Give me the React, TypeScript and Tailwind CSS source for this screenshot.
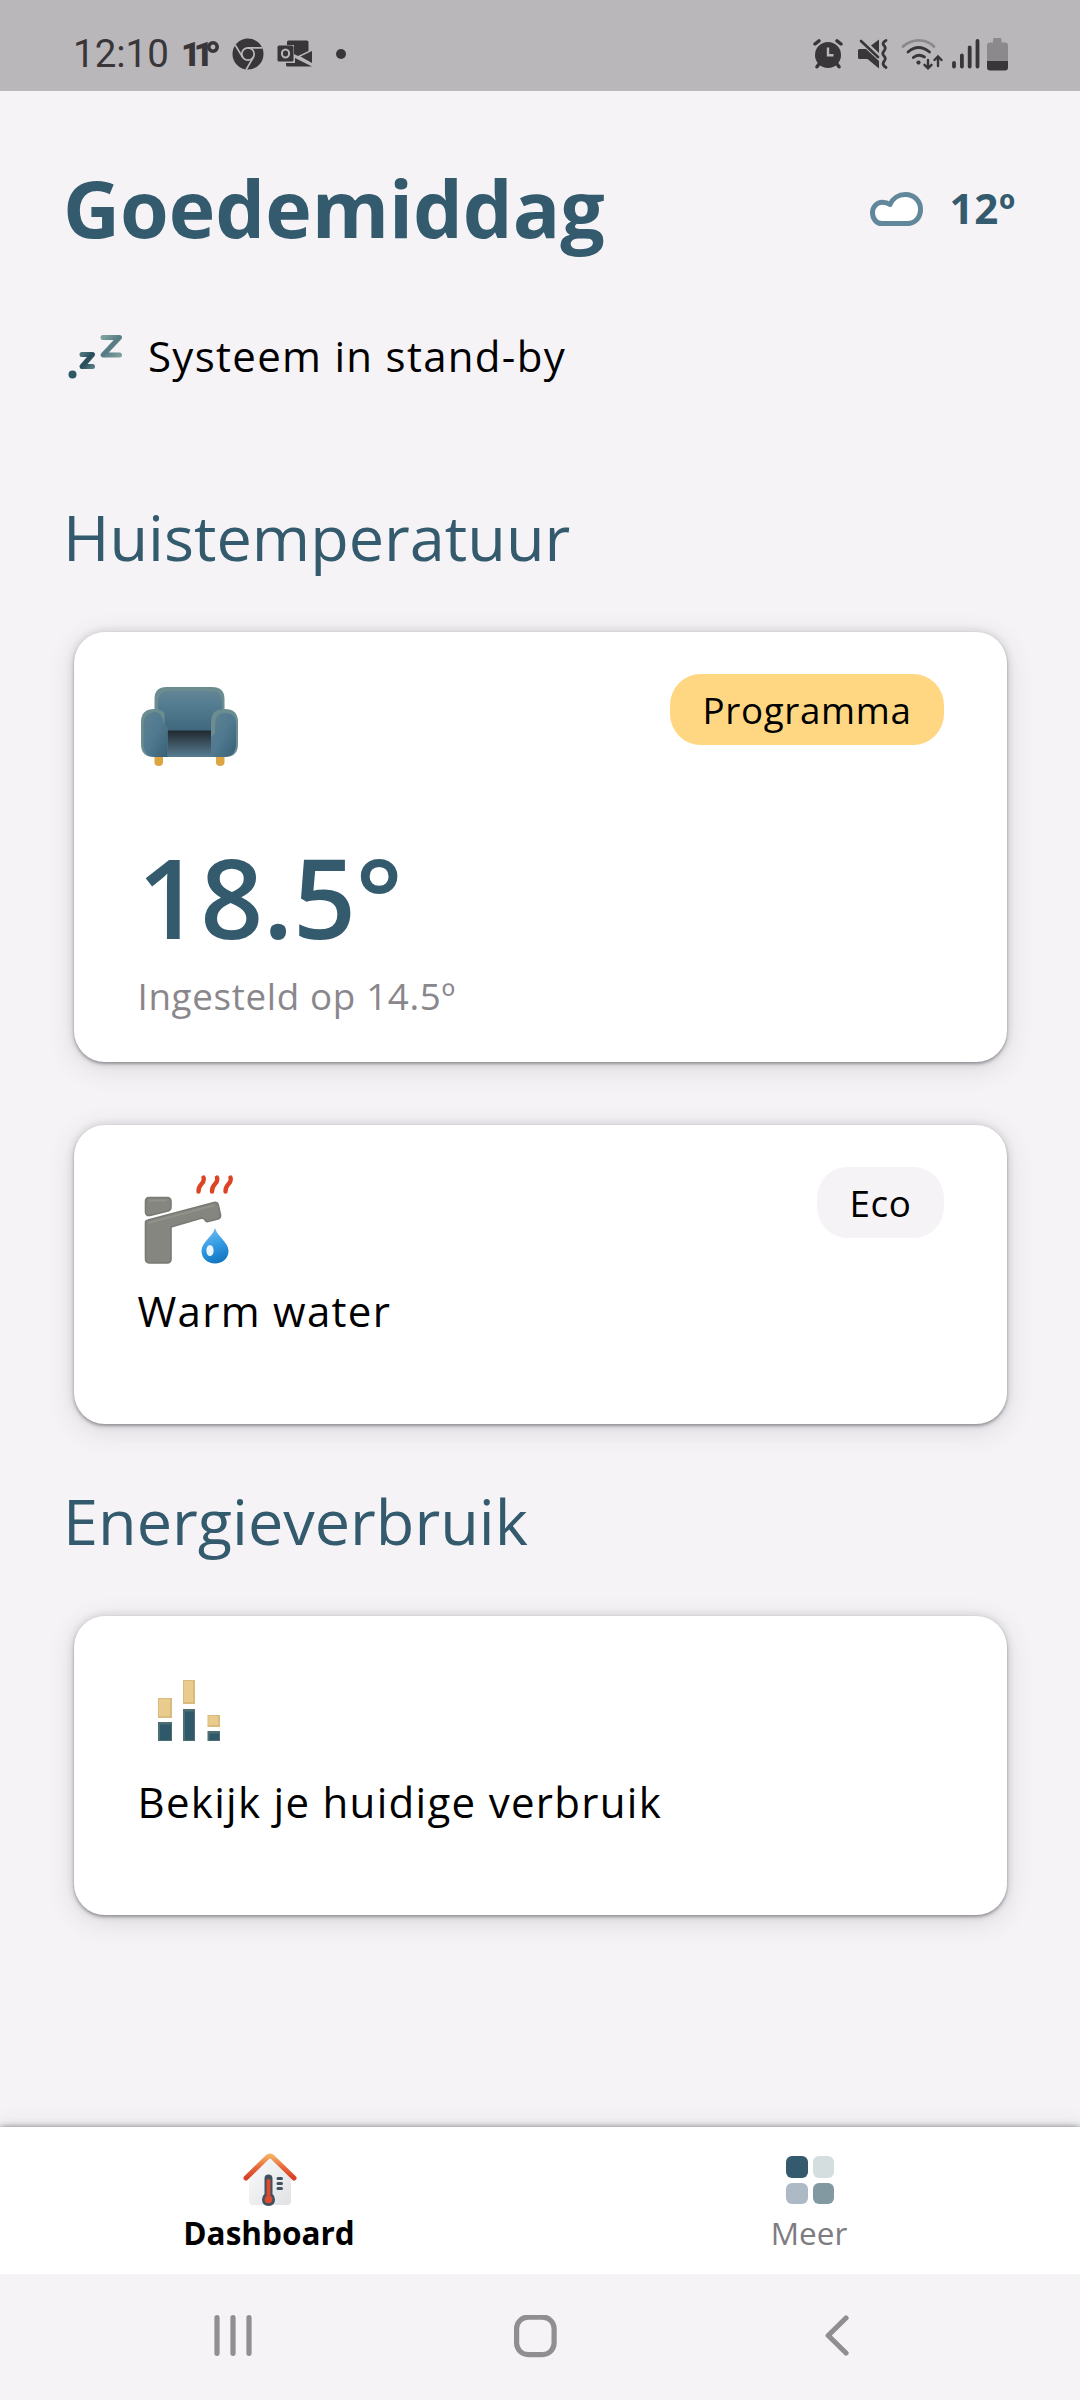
import type {ReactNode} from 'react';

function ChromeIcon() {
	return (
		<svg width="32" height="32" viewBox="0 0 32 32">
			<circle cx="16" cy="16" r="15.5" fill="#39363a" />
			<g fill="none" stroke="#b9b7b9" strokeWidth="1.7">
				<circle cx="16" cy="16" r="6.2" />
				<path d="M16 9.8H30M10.6 19.1L3.2 7M21.4 19.1L14.2 31.5" />
			</g>
		</svg>
	);
}

function OutlookIcon() {
	return (
		<svg width="35" height="28" viewBox="0 0 35 28">
			<path d="M10 2Q10 .5 11.5 .5H30Q31.5 .5 31.5 2V11L21 16 17 14V5H10z" fill="#39363a" />
			<path d="M35 11V23L23.5 16.5zM9 23H18V18L35 26.5H10.5Q9 26.5 9 25z" fill="#39363a" />
			<rect x=".5" y="5.5" width="16" height="16" rx="1.5" fill="#39363a" />
			<ellipse cx="8.5" cy="13.5" rx="3.6" ry="4" fill="none" stroke="#b9b7b9" strokeWidth="2" />
		</svg>
	);
}

function AlarmIcon() {
	return (
		<svg width="30" height="30" viewBox="0 0 30 30">
			<circle cx="15" cy="16" r="13" fill="#39363a" />
			<g fill="none" stroke="#39363a" strokeWidth="3.4" strokeLinecap="round">
				<path d="M2 5L6 1.8M28 5L24 1.8M6 25L4 27.8M24 25L26 27.8" />
			</g>
			<path d="M15 8.5V16.2H20.5" fill="none" stroke="#b9b7b9" strokeWidth="2.4" />
		</svg>
	);
}

function MuteVibrateIcon() {
	return (
		<svg width="31" height="30" viewBox="0 0 31 30">
			<path d="M1.5 10H8L21 22V29.5L9.5 20H1.5Q0 20 0 18.5V11.5Q0 10 1.5 10zM21 .5V14L13 6.5z" fill="#39363a" />
			<path d="M3 2L20 18" stroke="#39363a" strokeWidth="2.6" strokeLinecap="round" />
			<path
				d="M28 1.5Q23.5 4 26 6.5T26 12Q23.5 14.5 26 17T26 22.5Q23.5 25.5 28 28.5"
				fill="none"
				stroke="#39363a"
				strokeWidth="2.8"
				strokeLinecap="round"
			/>
		</svg>
	);
}

function WifiIcon() {
	return (
		<svg width="42" height="32" viewBox="0 0 42 32">
			<g fill="none" strokeWidth="2.8" strokeLinecap="round">
				<path d="M2 8.5C11 .2 25 .2 33 8.5" stroke="#8b898c" />
				<g stroke="#39363a">
					<path d="M7 14Q17.5 5 28.5 14M12.3 19.5Q17.5 15.2 23.5 19" />
					<path d="M27 22V30M23.5 26.8L27 30.3 30.5 26.8M37 28V19M33.5 22L37 18.5 40.5 22" strokeWidth="2.4" />
				</g>
			</g>
			<circle cx="17.5" cy="24.6" r="2.1" fill="#39363a" />
		</svg>
	);
}

function SignalIcon() {
	return (
		<svg width="28" height="30" viewBox="0 0 28 30">
			<path
				d="M2 24V27.5M9.9 16.5V27.5M17.7 8.5V27.5M25.5 2V27.5"
				stroke="#39363a"
				strokeWidth="3.8"
				strokeLinecap="round"
			/>
		</svg>
	);
}

function BatteryIcon() {
	return (
		<svg width="21" height="33" viewBox="0 0 21 33">
			<path d="M6 1.5Q6 0 7.5 0H13Q14.5 0 14.5 1.5V4.5H18Q21 4.5 21 7.5V23H0V7.5Q0 4.5 3 4.5H6z" fill="#8b898c" />
			<path d="M0 23H21V29.5Q21 32.5 18 32.5H3Q0 32.5 0 29.5z" fill="#39363a" />
		</svg>
	);
}

function StatusBar() {
	return (
		<div className="h-[91px] shrink-0 bg-[#b9b7b9] text-[#39363a] pt-[17px] pl-[73px] pr-[72px] flex items-center justify-between">
			<div className="flex items-center">
				<span className="w-[108px] font-[Roboto,sans-serif] text-[38.5px] leading-none">12:10</span>
				<span className="w-[26px] font-[Roboto,sans-serif] text-[34px] leading-none font-black tracking-[-7px]">11</span>
				<span className="w-[25px] h-[26px]">
					<svg width="12" height="12" viewBox="0 0 12 12">
						<circle cx="6" cy="6" r="4.2" fill="none" stroke="#39363a" strokeWidth="3.6" />
					</svg>
				</span>
				<ChromeIcon />
				<span className="ml-[13px]">
					<OutlookIcon />
				</span>
				<span className="ml-[24px] size-[10px] rounded-full bg-[#39363a]" />
			</div>
			<div className="flex items-center">
				<AlarmIcon />
				<span className="ml-[15px]">
					<MuteVibrateIcon />
				</span>
				<span className="ml-[12px]">
					<WifiIcon />
				</span>
				<span className="ml-[9px]">
					<SignalIcon />
				</span>
				<span className="ml-[7px]">
					<BatteryIcon />
				</span>
			</div>
		</div>
	);
}

function CloudIcon() {
	return (
		<svg width="53" height="35" viewBox="0 0 53 35">
			<path
				d="M12 31.5H37.5C45 31.5 50.5 25.5 50.5 17.5 50.5 9 44 2.5 35.5 2.5 28.5 2.5 22.5 6.5 20 12.5 17.5 10.8 15 10.3 12.5 10.3 6.5 10.3 2.5 15 2.5 20.8 2.5 27 6.5 31.5 12 31.5z"
				fill="#fff"
				stroke="#62879a"
				strokeWidth="5"
				strokeLinejoin="round"
			/>
		</svg>
	);
}

function SleepIcon() {
	return (
		<svg width="55" height="50" viewBox="0 0 55 50">
			<defs>
				<linearGradient id="zzz" x1="0" y1="0" x2="1" y2="1">
					<stop offset="0" stopColor="#7e9f9f" />
					<stop offset=".5" stopColor="#547b83" />
					<stop offset="1" stopColor="#7d9e9c" />
				</linearGradient>
				<linearGradient id="zzzDark" x1="0" y1="0" x2="1" y2="1">
					<stop offset="0" stopColor="#4b727b" />
					<stop offset=".5" stopColor="#264c5c" />
					<stop offset="1" stopColor="#52777c" />
				</linearGradient>
			</defs>
			<g fill="none" strokeLinecap="round" strokeLinejoin="round">
				<path d="M35 6.5H51.5L35 24H51.5" stroke="url(#zzz)" strokeWidth="5" />
				<path d="M14 23.5H24.5L14 35.5H24.5" stroke="url(#zzzDark)" strokeWidth="5" />
			</g>
			<circle cx="4.5" cy="43.5" r="4" fill="#2f5867" />
		</svg>
	);
}

function SofaIcon() {
	return (
		<svg width="97" height="80" viewBox="0 0 97 80">
			<defs>
				<linearGradient id="sofa" x1="0" y1="0" x2="0" y2="1">
					<stop offset="0" stopColor="#628595" />
					<stop offset=".35" stopColor="#537c91" />
					<stop offset="1" stopColor="#3d657b" />
				</linearGradient>
				<linearGradient id="sofaArm" x1="0" y1="0" x2="1" y2="1">
					<stop offset="0" stopColor="#5e8190" />
					<stop offset=".5" stopColor="#507990" />
					<stop offset="1" stopColor="#385f75" />
				</linearGradient>
				<linearGradient id="sofaSeat" x1="0" y1="0" x2="0" y2="1">
					<stop offset="0" stopColor="#20292f" />
					<stop offset="1" stopColor="#587d92" />
				</linearGradient>
			</defs>
			<path d="M13.5 66H22V75Q22 79 17.7 79T13.5 75zM75 66H83.5V75Q83.5 79 79.2 79T75 75z" fill="#dda442" />
			<path d="M13.5 46V12Q13.5 0 25.5 0H71Q83.5 0 83.5 12V46z" fill="#6b8d90" />
			<path d="M17 46V15Q17 4 28 4H69Q81 4 81 15V46z" fill="url(#sofa)" />
			<rect x="25" y="43.5" width="47" height="26.5" fill="url(#sofaSeat)" />
			<path d="M0 35Q0 22 13.5 22 20 22 23.5 26V38L26.5 41V70H13Q0 70 0 57z" fill="#6b8d90" />
			<path d="M2.5 37Q2.5 26 14 25 21 25 23 37L26.5 41V70H13Q2.5 69 2.5 57z" fill="url(#sofaArm)" />
			<path d="M70 35Q70 22 83.5 22 97 22 97 35V57Q97 70 84 70H70z" fill="#6b8d90" />
			<path d="M74 39Q74 26 84 26 95 26 95 37V57Q95 69 84 70H70V50L74 46z" fill="url(#sofaArm)" />
		</svg>
	);
}

function TapIcon() {
	return (
		<svg width="92" height="90" viewBox="0 0 92 90">
			<defs>
				<linearGradient id="drop" x1=".3" y1="0" x2=".6" y2="1">
					<stop offset="0" stopColor="#72bdf0" />
					<stop offset=".5" stopColor="#329be3" />
					<stop offset="1" stopColor="#1174bf" />
				</linearGradient>
			</defs>
			<g fill="#85867f" stroke="#797a74" strokeWidth="1.6" strokeLinejoin="round">
				<path d="M5 22.5H23Q27 22.5 27 26.5V32Q27 35 24 36L6 40.5Q1.5 41 1.5 37V26.5Q1.5 22.5 5 22.5z" />
				<path d="M1.5 47.5Q1.5 45.5 4 45L70 27.5Q73.5 27 74.3 30L76.5 40Q77 43 74 44L64 46.5Q61.5 47 60.5 44L58 43 27 52V84Q27 88 23 88H6Q1.5 88 1.5 84z" />
			</g>
			<path d="M4 48L71 30M5 25.5H23" stroke="#919289" strokeWidth="2" />
			<path
				d="M59.5 2.5Q60.5 6 57.5 9T54.5 16.5M73 2.5Q74 6 71 9T68 16.5M86.5 2.5Q87.5 6 84.5 9T81.5 16.5"
				fill="none"
				stroke="#dc4524"
				strokeWidth="4.4"
				strokeLinecap="round"
			/>
			<path d="M71 53C68.5 62 57.5 67 57.5 76 57.5 83.5 63.5 88.5 71 88.5S84.5 83.500 84.500 76C84.500 67 73.500 62 71 53z" fill="url(#drop)" />
			<ellipse cx="66" cy="75.5" rx="3.6" ry="5.5" fill="#eaf5fd" />
		</svg>
	);
}

const bars = [
	{x: 0, width: 14, light: [18, 20], dark: [42, 19]},
	{x: 25, width: 12, light: [0, 24], dark: [29, 32]},
	{x: 49.5, width: 12.5, light: [35, 12], dark: [51, 10]},
];

function UsageIcon() {
	return (
		<svg width="62" height="61" viewBox="0 0 62 61">
			{bars.map((b) => (
				<g key={b.x}>
					<rect x={b.x} y={b.light[0]} width={b.width} height={b.light[1]} fill="#d8bc7d" />
					<rect x={b.x + 1} y={b.light[0] + 1} width={b.width - 3} height={b.light[1] - 3} fill="#e8cb8d" />
					<rect x={b.x} y={b.dark[0]} width={b.width} height={b.dark[1]} fill="#4d6f72" />
					<rect x={b.x + 2} y={b.dark[0] + 2.5} width={b.width - 3} height={b.dark[1] - 3.5} fill="#2f586a" />
				</g>
			))}
		</svg>
	);
}

function HouseIcon() {
	return (
		<svg width="54" height="54" viewBox="0 0 54 54">
			<defs>
				<linearGradient id="roof" x1="0" y1="0" x2="0" y2="1">
					<stop offset="0" stopColor="#f3ae62" />
					<stop offset=".5" stopColor="#e8693d" />
					<stop offset="1" stopColor="#d73f26" />
				</linearGradient>
				<linearGradient id="wall" x1="0" y1="0" x2="1" y2="1">
					<stop offset="0" stopColor="#fbfbfc" />
					<stop offset="1" stopColor="#dfe1e4" />
				</linearGradient>
			</defs>
			<path d="M6 23L27 4 48 23V48Q48 52 44 52H10Q6 52 6 48z" fill="url(#wall)" />
			<path d="M3 25L24.5 4Q27 2 29.5 4L51 25" fill="none" stroke="url(#roof)" strokeWidth="5" strokeLinecap="round" />
			<path d="M35 25.5H38.5M35 30.5H38.5M35 35.5H38.5" stroke="#405260" strokeWidth="3" strokeLinecap="round" />
			<path d="M21.5 25.5Q21.5 21.5 25.5 21.5T29.5 25.5V41Q32 43 32 46.5 32 53 25.5 53T19 46.5Q19 43 21.5 41z" fill="#405260" />
			<path d="M25.5 28V46" stroke="#dc4b2c" strokeWidth="4" strokeLinecap="round" />
			<circle cx="25.5" cy="46.5" r="3.8" fill="#dc4b2c" />
		</svg>
	);
}

function Card({className, children}: {className: string; children: ReactNode}) {
	return (
		<div
			className={`mx-[9.5px] rounded-[31px] bg-white pl-16 pr-[63px] shadow-[0_2px_3px_rgba(60,55,62,0.4),0_0_8px_rgba(60,55,62,0.2),0_6px_28px_rgba(60,55,62,0.14)] ${className}`}
		>
			{children}
		</div>
	);
}

function Heading({className, children}: {className: string; children: ReactNode}) {
	return <h2 className={`-ml-px text-[63px] leading-[86px] text-[#335a6d] ${className}`}>{children}</h2>;
}

export default function App() {
	return (
		<div className="w-[1080px] h-[2400px] flex flex-col overflow-hidden bg-[#f5f3f6] text-black font-['Open_Sans',sans-serif]">
			<StatusBar />

			<main className="flex-1 px-16 pt-[63px]">
				<div className="-ml-px flex items-center justify-between text-[#335a6d] font-bold">
					<h1 className="text-[78.75px] leading-[108px]">Goedemiddag</h1>
					<div className="flex items-center gap-[27px]">
						<div className="mt-[2px]">
							<CloudIcon />
						</div>
						<span className="-mt-[2px] text-[42px] leading-[57px] tracking-[0.7px]">12º</span>
					</div>
				</div>

				<div className="mt-[64px] h-[60px] flex items-center pl-[4px]">
					<SleepIcon />
					<span className="ml-[25px] text-[42px] leading-[60px] tracking-[1.3px]">Systeem in stand-by</span>
				</div>

				<Heading className="mt-[108px]">Huistemperatuur</Heading>
				<Card className="mt-[52px] h-[430px] pt-[42px]">
					<div className="h-[92px] flex items-start justify-between">
						<div className="mt-[13px] ml-[3px]">
							<SofaIcon />
						</div>
						<span className="h-[71px] px-[32px] rounded-[31px] bg-[#ffd782] text-[36.75px] leading-[73px] tracking-[0.66px]">
							Programma
						</span>
					</div>
					<p className="mt-[75px] text-[110.25px] leading-[110px] font-semibold tracking-[-0.3px] text-[#335a6d]">18.5°</p>
					<p className="mt-[20px] text-[36.75px] leading-[50px] tracking-[0.66px] text-[#8a878c]">Ingesteld op 14.5º</p>
				</Card>

				<Card className="mt-[63px] h-[299px] pt-[42px]">
					<div className="h-[115px] flex items-start justify-between">
						<div className="mt-[8px] ml-[6px]">
							<TapIcon />
						</div>
						<span className="h-[71px] px-[32px] rounded-[31px] bg-[#f5f3f6] text-[36.75px] leading-[73px] tracking-[0.66px]">
							Eco
						</span>
					</div>
					<p className="text-[42px] leading-[57px] tracking-[1.3px]">Warm water</p>
				</Card>

				<Heading className="mt-[54px]">Energieverbruik</Heading>
				<Card className="mt-[52px] h-[299px] pt-[64px]">
					<div className="h-[93px] pl-[20px]">
						<UsageIcon />
					</div>
					<p className="text-[42px] leading-[57px] tracking-[1.3px]">Bekijk je huidige verbruik</p>
				</Card>
			</main>

			<nav className="h-[147px] shrink-0 grid grid-cols-2 bg-white pt-[26px] text-[31.5px] leading-[43px] shadow-[0_0_6px_rgba(60,55,62,0.6),0_0_20px_rgba(60,55,62,0.14)]">
				<div className="flex flex-col items-center">
					<HouseIcon />
					<span className="mr-[2px] mt-[4px] font-bold">Dashboard</span>
				</div>
				<div className="flex flex-col items-center text-[#7f7c81]">
					<div className="mt-[3px] h-[48px] grid grid-cols-2 gap-[5px]">
						<span className="size-[21.5px] rounded-[6px] bg-[#335a6d]" />
						<span className="size-[21.5px] rounded-[6px] bg-[#d5dedf]" />
						<span className="size-[21.5px] rounded-[6px] bg-[#adbac6]" />
						<span className="size-[21.5px] rounded-[6px] bg-[#8299a2]" />
					</div>
					<span className="mr-[2px] mt-[7px]">Meer</span>
				</div>
			</nav>

			<div className="relative h-[126px] shrink-0 flex items-start justify-between bg-[#f5f3f6] pt-[41px] pl-[214px] pr-[229px]">
				<svg width="39" height="42" viewBox="0 0 39 42">
					<path d="M3 2.7V38.3M19 2.7V38.3M35 2.7V38.3" stroke="#908e91" strokeWidth="5.2" strokeLinecap="round" />
				</svg>
				<svg width="43" height="43" viewBox="0 0 43 43" className="mr-[8px]">
					<rect x="2.6" y="2.100" width="37.5" height="37.5" rx="11.5" fill="none" stroke="#908e91" strokeWidth="5.2" />
				</svg>
				<svg width="26" height="42" viewBox="0 0 26 42">
					<path d="M21 3L3.2 20.5 21 38" fill="none" stroke="#908e91" strokeWidth="5.2" strokeLinecap="round" strokeLinejoin="round" />
				</svg>
			</div>
		</div>
	);
}
